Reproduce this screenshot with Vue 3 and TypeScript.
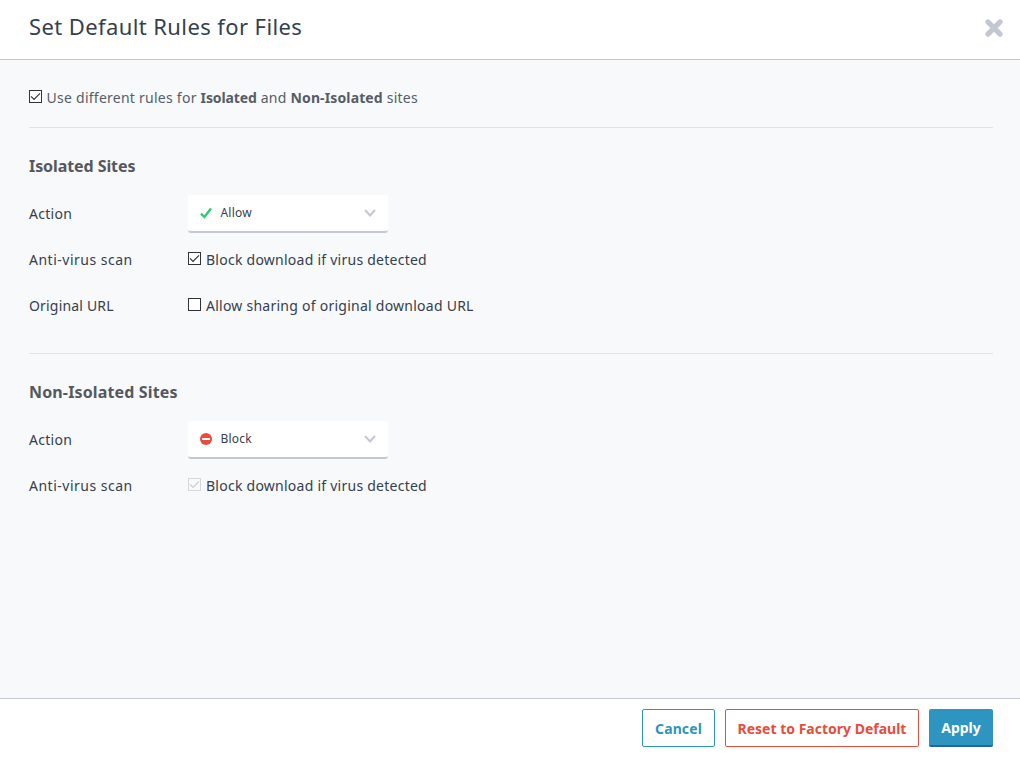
<script setup lang="ts">
import { ref } from 'vue'

interface Group {
  id: string
  title: string
  action: 'Allow' | 'Block'
  scan: boolean
  locked: boolean
  shareUrl?: boolean
}

const separateRules = ref(true)
const groups = ref<Group[]>([
  { id: 'isolated', title: 'Isolated Sites', action: 'Allow', scan: true, locked: false, shareUrl: false },
  { id: 'non-isolated', title: 'Non-Isolated Sites', action: 'Block', scan: true, locked: true },
])
</script>

<template>
  <div class="dialog">
    <header class="head">
      <h1>Set Default Rules for Files</h1>
      <button class="close" aria-label="Close">
        <svg width="20" height="20" viewBox="0 0 20 20"><path d="M3.9 3.9L16.1 16.1M16.1 3.9L3.9 16.1" stroke="#c3c7d2" stroke-width="5.2" stroke-linecap="round" /></svg>
      </button>
    </header>

    <main class="body">
      <label class="mode">
        <input v-model="separateRules" type="checkbox" />
        <span>Use different rules for <b>Isolated</b> and <b class="wide">Non-Isolated</b> sites</span>
      </label>

      <section v-for="g in groups" :key="g.id" class="group">
        <h2 :class="g.id">{{ g.title }}</h2>
        <div class="row">
          <span class="name">Action</span>
          <button class="select">
            <svg v-if="g.action === 'Allow'" width="12" height="12" viewBox="0 0 12 12"><path d="M1 6.7L4.4 10L11 1.4" fill="none" stroke="#2ecc71" stroke-width="2.4" /></svg>
            <svg v-else width="12" height="12" viewBox="0 0 12 12"><circle cx="6" cy="6" r="6" fill="#e74c3c" /><rect x="2" y="5" width="8" height="2" rx=".4" fill="#fff" /></svg>
            <span class="value">{{ g.action }}</span>
            <svg width="12" height="8" viewBox="0 0 12 8"><path d="M1 1L6 6.5L11 1" fill="none" stroke="#c3c7d2" stroke-width="2" /></svg>
          </button>
        </div>
        <div class="row">
          <span class="name scan">Anti-virus scan</span>
          <label>
            <input v-model="g.scan" type="checkbox" :disabled="g.locked" />
            <span>Block download if virus detected</span>
          </label>
        </div>
        <div v-if="g.shareUrl !== undefined" class="row">
          <span class="name url">Original URL</span>
          <label>
            <input v-model="g.shareUrl" type="checkbox" />
            <span>Allow sharing of original download URL</span>
          </label>
        </div>
      </section>
    </main>

    <footer class="foot">
      <button class="btn cancel">Cancel</button>
      <button class="btn reset">Reset to Factory Default</button>
      <button class="btn apply">Apply</button>
    </footer>
  </div>
</template>

<style scoped>
.dialog {
  box-sizing: border-box;
  display: flex;
  flex-direction: column;
  width: 1020px;
  height: 759px;
  background: #fff;
  color: #34404f;
  font: 14px/20px "Noto Sans", "Open Sans", sans-serif;
  white-space: nowrap;
  overflow: hidden;
}
button {
  font: inherit;
  color: inherit;
  margin: 0;
  padding: 0;
  border: 0;
  background: none;
}
svg { display: block; flex: none; }
.head {
  box-sizing: border-box;
  display: flex;
  justify-content: space-between;
  height: 60px;
  padding: 10px 16px 0 29px;
  border-bottom: 1px solid #c3c7d2;
}
h1 { margin: 0; font-size: 22px; line-height: 32px; font-weight: 400; letter-spacing: .4px; }
.close { height: 20px; margin-top: 8px; }
.body {
  flex: 1;
  padding: 0 27px 0 29px;
  background: #f8f9fb;
}
label { display: flex; align-items: center; letter-spacing: .25px; }
.mode { box-sizing: border-box; height: 67px; padding-top: 9px; color: #555d68; }
.mode b { letter-spacing: -.1px; }
.mode b.wide { letter-spacing: .13px; }
input {
  appearance: none;
  box-sizing: border-box;
  flex: none;
  width: 13px;
  height: 13px;
  margin: -4px 5px 0 0;
  border: 1px solid #333;
  background: #fff center no-repeat;
}
input:checked {
  background-image: url("data:image/svg+xml,%3Csvg xmlns='http://www.w3.org/2000/svg' width='11' height='11'%3E%3Cpath d='M1 5.3L4 8.3L10 2.3' fill='none' stroke='%23333' stroke-width='1.2'/%3E%3C/svg%3E");
}
input:disabled { border-color: #d5d7da; background-color: transparent; opacity: 1; }
input:disabled:checked {
  background-image: url("data:image/svg+xml,%3Csvg xmlns='http://www.w3.org/2000/svg' width='11' height='11'%3E%3Cpath d='M1 5.3L4 8.3L10 2.3' fill='none' stroke='%23cccccc' stroke-width='1.2'/%3E%3C/svg%3E");
}
.mode input { margin-right: 4.6px; }
.group { border-top: 1px solid #e1e3e6; padding: 26px 0 24px; }
h2 { margin: 0 0 13px; font-size: 16px; line-height: 24px; font-weight: 700; color: #54585e; }
h2.isolated { letter-spacing: -.08px; }
h2.non-isolated { letter-spacing: .15px; }
.row { display: flex; align-items: center; height: 46px; }
.name { flex: 0 0 159px; letter-spacing: .3px; }
.name.scan { letter-spacing: .5px; }
.name.url { letter-spacing: .18px; }
.select {
  display: flex;
  align-items: center;
  box-sizing: border-box;
  width: 200px;
  height: 38px;
  padding: 0 12px;
  border-bottom: 2px solid #c3c7d2;
  border-radius: 3px;
  background: #fff;
  font-size: 12px;
}
.value { flex: 1; margin-left: 8.5px; text-align: left; letter-spacing: .2px; }
.foot {
  box-sizing: border-box;
  display: flex;
  justify-content: flex-end;
  gap: 10px;
  height: 61px;
  padding: 10px 27px 0 0;
  border-top: 1px solid #c3c7d2;
}
.btn {
  display: flex;
  align-items: center;
  justify-content: center;
  box-sizing: border-box;
  height: 38px;
  padding-top: 2px;
  border: 1px solid;
  border-radius: 2px;
  font-weight: 700;
}
.cancel { width: 73px; color: #2e95c1; letter-spacing: .1px; }
.reset { width: 194px; color: #e74c3c; }
.apply { width: 64px; color: #fff; background: #2e95c1; border: 0; border-bottom: 2px solid #2563a5; }
</style>
